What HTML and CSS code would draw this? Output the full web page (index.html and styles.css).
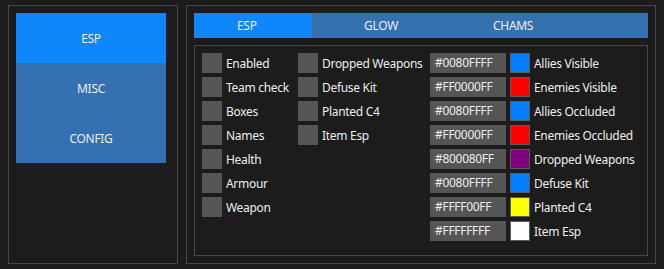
FILE: index.html
```html
<!DOCTYPE html>
<html lang="en">
<head>
  <meta charset="UTF-8" />
  <title>ESP Menu</title>
  <link rel="stylesheet" href="styles.css">
</head>
<body>
  <div class="app">
    <aside class="sidebar">
      <button class="nav-btn active">ESP</button>
      <button class="nav-btn">MISC</button>
      <button class="nav-btn">CONFIG</button>
    </aside>

    <main class="main">
      <nav class="tabs">
        <button class="tab tab-esp active">ESP</button>
        <button class="tab tab-glow">GLOW</button>
        <button class="tab tab-chams">CHAMS</button>
      </nav>

      <section class="content">
        <!-- player toggles -->
        <div class="col col-player">
          <label class="check"><span class="box"></span>Enabled</label>
          <label class="check"><span class="box"></span>Team check</label>
          <label class="check"><span class="box"></span>Boxes</label>
          <label class="check"><span class="box"></span>Names</label>
          <label class="check"><span class="box"></span>Health</label>
          <label class="check"><span class="box"></span>Armour</label>
          <label class="check"><span class="box"></span>Weapon</label>
        </div>

        <!-- world toggles -->
        <div class="col col-world">
          <label class="check"><span class="box"></span>Dropped Weapons</label>
          <label class="check"><span class="box"></span>Defuse Kit</label>
          <label class="check"><span class="box"></span>Planted C4</label>
          <label class="check"><span class="box"></span>Item Esp</label>
        </div>

        <!-- colours -->
        <div class="col col-colors">
          <div class="color-row"><span class="hex">#0080FFFF</span><span class="swatch blue"></span>Allies Visible</div>
          <div class="color-row"><span class="hex">#FF0000FF</span><span class="swatch red"></span>Enemies Visible</div>
          <div class="color-row"><span class="hex">#0080FFFF</span><span class="swatch blue"></span>Allies Occluded</div>
          <div class="color-row"><span class="hex">#FF0000FF</span><span class="swatch red"></span>Enemies Occluded</div>
          <div class="color-row"><span class="hex">#800080FF</span><span class="swatch purple"></span>Dropped Weapons</div>
          <div class="color-row"><span class="hex">#0080FFFF</span><span class="swatch blue"></span>Defuse Kit</div>
          <div class="color-row"><span class="hex">#FFFF00FF</span><span class="swatch yellow"></span>Planted C4</div>
          <div class="color-row"><span class="hex">#FFFFFFFF</span><span class="swatch white"></span>Item Esp</div>
        </div>
      </section>
    </main>
  </div>
</body>
</html>
```

FILE: styles.css
```css
/* Base */
body {
  margin: 0;
  background-color: #1c1c1c;
  color: #ececec;
  font-family: 'Noto Sans', sans-serif;
  font-size: 12px;
  letter-spacing: -0.3px;
}

button {
  font: inherit;
  color: inherit;
  letter-spacing: inherit;
  border: none;
  margin: 0;
  cursor: pointer;
}

.app {
  display: flex;
  gap: 8px;
  padding: 5px 0 0 8px;
}

/* Left menu */
.sidebar {
  box-sizing: border-box;
  width: 170px;
  height: 259px;
  padding: 7px;
  border: 1px solid #46464b;
  display: flex;
  flex-direction: column;
}

.nav-btn {
  width: 150px;
  height: 50px;
  background-color: #3570b0;
}

.nav-btn.active {
  background-color: #0f87fa;
}

/* Right panel */
.main {
  box-sizing: border-box;
  width: 470px;
  height: 259px;
  padding: 7px;
  border: 1px solid #46464b;
}

.tabs {
  display: flex;
  height: 25px;
  background-color: #3570b0;
}

.tab {
  background: none;
  text-align: left;
  padding: 0;
}

.tab.active {
  background-color: #0f87fa;
}

.tab-esp { width: 118px; padding-left: 43px; }
.tab-glow { width: 130px; padding-left: 52px; }
.tab-chams { flex: 1; padding-left: 51px; }

.content {
  box-sizing: border-box;
  height: 211px;
  margin-top: 7px;
  padding: 7px;
  border: 1px solid #46464b;
  display: flex;
}

.col {
  display: flex;
  flex-direction: column;
  gap: 4px;
}

.col-player { width: 96px; }
.col-world { width: 132px; }

.check, .color-row {
  display: flex;
  align-items: center;
  height: 20px;
  white-space: nowrap;
}

.box {
  width: 20px;
  height: 20px;
  margin-right: 4px;
  background-color: #555555;
}

.hex {
  box-sizing: border-box;
  width: 76px;
  height: 20px;
  line-height: 20px;
  padding-left: 5px;
  margin-right: 4px;
  background-color: #555555;
}

.swatch {
  box-sizing: border-box;
  width: 20px;
  height: 20px;
  margin-right: 4px;
  border: 1px solid #5c5c5c;
}

.blue { background-color: #0080ff; }
.red { background-color: #ff0000; }
.purple { background-color: #800080; }
.yellow { background-color: #ffff00; }
.white { background-color: #ffffff; }
```
